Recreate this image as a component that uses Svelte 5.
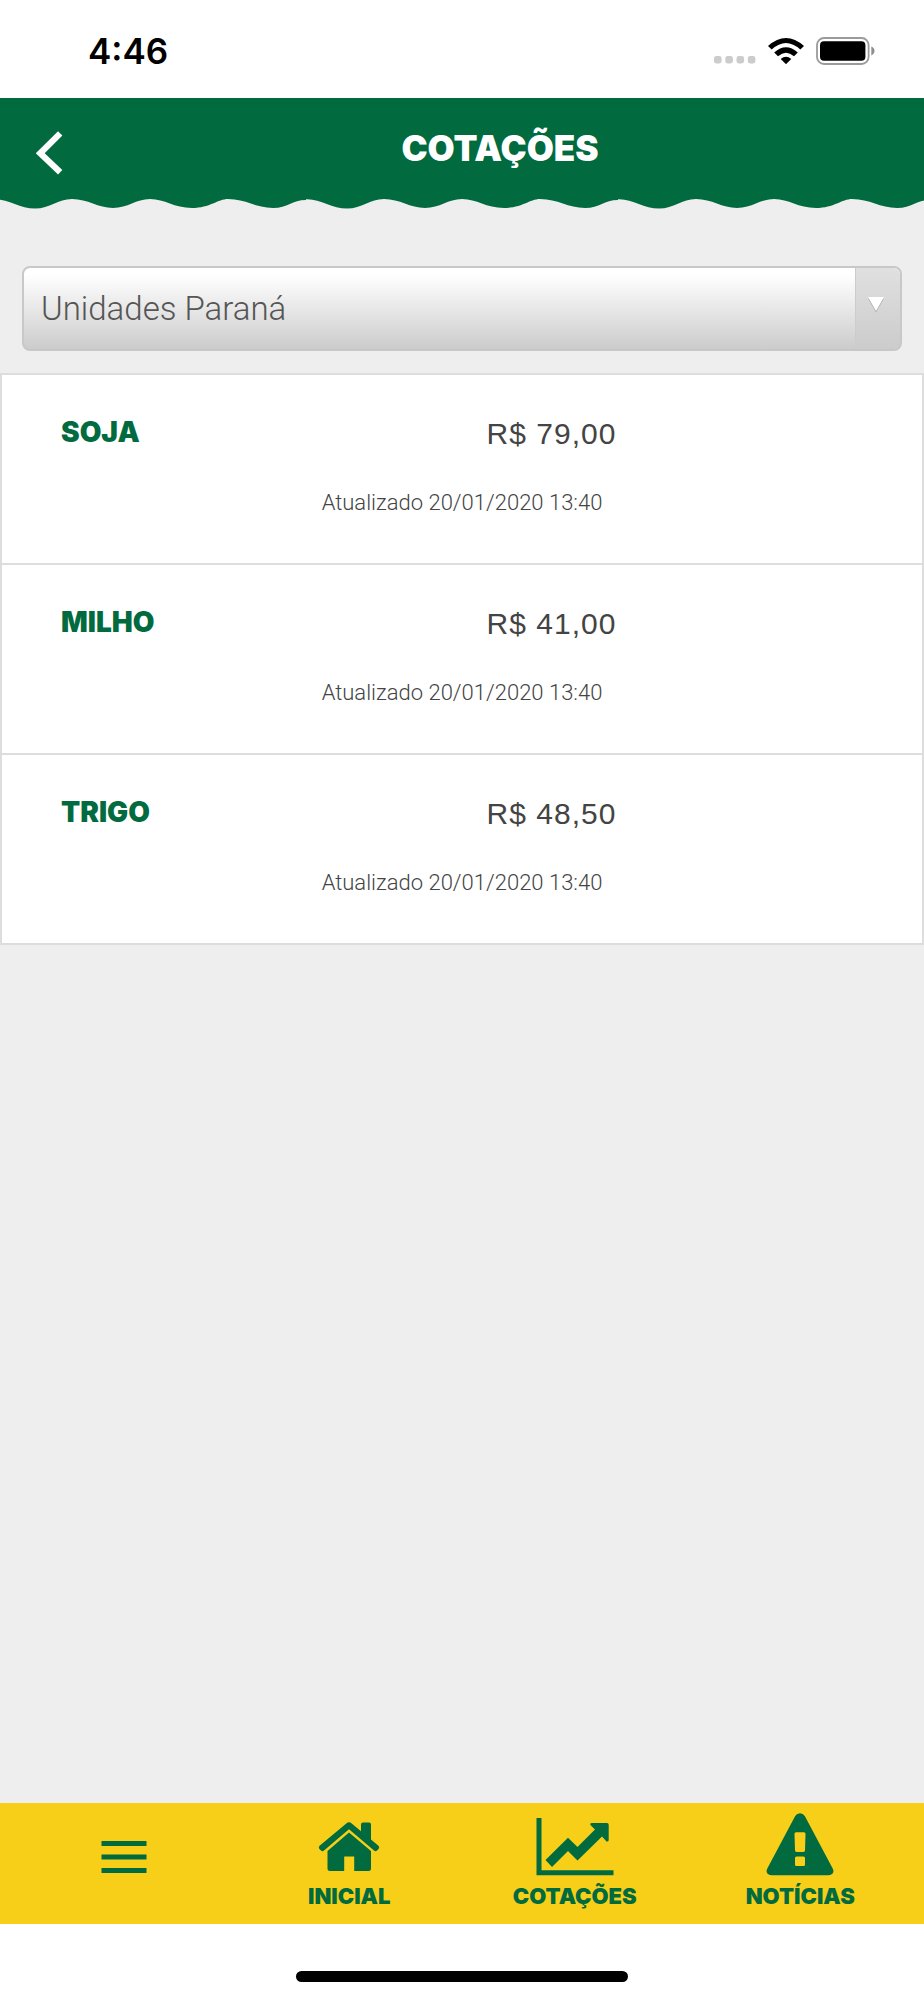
<script>
  const quotes = [
    { name: 'SOJA', price: 'R$ 79,00', updated: 'Atualizado 20/01/2020 13:40' },
    { name: 'MILHO', price: 'R$ 41,00', updated: 'Atualizado 20/01/2020 13:40' },
    { name: 'TRIGO', price: 'R$ 48,50', updated: 'Atualizado 20/01/2020 13:40' }
  ];
  let unit = $state('Unidades Paraná');
</script>

<div class="screen">
  <div class="status">
    <time>4:46</time>
    <div class="indicators">
      <svg class="dots" width="42" height="8" viewBox="0 0 42 8" aria-hidden="true">
        <rect x="0" y="0" width="7.6" height="7.4" rx="2.4" />
        <rect x="11.3" y="0" width="7.6" height="7.4" rx="2.4" />
        <rect x="22.5" y="0" width="7.6" height="7.4" rx="2.4" />
        <rect x="33.8" y="0" width="7.6" height="7.4" rx="2.4" />
      </svg>
      <svg class="wifi" width="36" height="26" viewBox="0 0 36 26" aria-hidden="true">
        <path d="M0 8Q18-8 36 8L32.3 11.6Q18-1.4 3.7 11.6Z" />
        <path d="M6.2 14.6Q18 3.8 29.8 14.6L26 18.3Q18 11 10 18.3Z" />
        <path d="M12.7 20.9Q18 16.6 23.3 20.9L18 26.2Z" />
      </svg>
      <svg class="battery" width="60" height="28" viewBox="0 0 60 28" aria-hidden="true">
        <rect x="1" y="1" width="51.6" height="26" rx="7" fill="none" stroke="#9b9b9b" stroke-width="1.8" />
        <rect x="4" y="4.3" width="45.4" height="19.4" rx="4" fill="#000" />
        <path d="M55.3 9.6C59.6 11.2 59.6 16.8 55.3 18.4Z" fill="#8e8e8e" />
      </svg>
    </div>
  </div>

  <header>
    <div class="bar">
      <button class="back" aria-label="Voltar">
        <svg width="28" height="46" viewBox="0 0 28 46"><path d="M24.2 3.4L4.2 23.3L24.2 42.2" fill="none" stroke="#fff" stroke-width="6.2" /></svg>
      </button>
      <h1>COTAÇÕES</h1>
    </div>
    <svg class="wave" width="100%" height="12" aria-hidden="true">
      <defs>
        <pattern id="scallop" x="-6" width="312" height="12" patternUnits="userSpaceOnUse">
          <path fill="#016b3f" d="M0 0V1.2C14 .5 26 10.6 41 10.6C56 10.6 64 1 78 1C94 1 104 10 119 10C134 10 142 1 156 1C171 1 180 10 198 10C216 10 224 1 234 1C252 1 262 10 279 10C294 10 298 2 312 2V0Z" />
        </pattern>
      </defs>
      <rect width="100%" height="12" fill="url(#scallop)" />
    </svg>
  </header>

  <main>
    <div class="picker">
      <select bind:value={unit} aria-label="Unidade">
        <option>Unidades Paraná</option>
      </select>
      <span class="arrow" aria-hidden="true">
        <svg width="18" height="18" viewBox="0 0 18 18">
          <path d="M1 2.5H17L9 16.5Z" fill="#adadad" />
          <path d="M1 1H17L9 15Z" fill="#fff" />
        </svg>
      </span>
    </div>

    <ul>
      {#each quotes as q}
        <li>
          <div class="line">
            <h2>{q.name}</h2>
            <span class="price">{q.price}</span>
          </div>
          <p>{q.updated}</p>
        </li>
      {/each}
    </ul>
  </main>

  <nav>
    <button aria-label="Menu">
      <svg width="46" height="34" viewBox="0 0 46 34"><path d="M.5 1h45v5h-45zM.5 14.5h45v5h-45zM.5 28h45v5h-45z" /></svg>
    </button>
    <a href="#inicial">
      <svg width="62" height="64" viewBox="0 0 62 64">
        <path d="M1.4 36Q0 34.4 1.6 32.8L28.3 10.4Q31 8.3 33.7 10.4L43 18.2V11.5Q43 9.6 45 9.6H51Q53 9.6 53 11.5V26.6L60.4 32.8Q62 34.4 60.6 36L59 37.6Q57.7 39 56 37.6L31 16.2L6 37.6Q4.300 39 3 37.6Z" />
        <path d="M31 19.400L53 38V55.500Q53 58 50.500 58H36.200V43.500H26.200V58H12Q9.500 58 9.500 55.500V38Z" />
      </svg>
      <span>INICIAL</span>
    </a>
    <a href="#cotacoes">
      <svg width="78" height="64" viewBox="0 0 78 64">
        <path d="M.5 5H5.500V57.300H77.500V62.300H.5Z" />
        <path d="M9.500 47L32 24.700L41.500 34L59 16.500L54.400 12Q53.800 10 55.500 10H71Q72.700 10 72.700 11.700V27Q72.500 29 70.500 28.500L66 23.500L41.500 47.500L32 38L16 54Z" />
      </svg>
      <span>COTAÇÕES</span>
    </a>
    <a href="#noticias">
      <svg width="68" height="64" viewBox="0 0 68 64">
        <path fill-rule="evenodd" d="M29.200 3Q31 .2 34 .2T38.800 3L66.700 55.500Q68.200 58.500 66.600 60.500Q65.300 62.300 62.500 62.300H5.500Q2.700 62.300 1.400 60.500Q-.2 58.500 1.300 55.500ZM30 19.300Q28.500 19.300 28.500 20.900L29 37.500Q29.100 38.900 30.500 38.900H37.500Q38.900 38.900 39 37.500L39.500 20.900Q39.500 19.300 38 19.300ZM30.500 43.500Q29 43.500 29 45V51.500Q29 53 30.500 53H37.500Q39 53 39 51.500V45Q39 43.500 37.500 43.500Z" />
      </svg>
      <span>NOTÍCIAS</span>
    </a>
  </nav>
  <div class="home"><span></span></div>
</div>

<style>
  :global(body) {
    margin: 0;
    background: #fff;
  }
  * {
    box-sizing: border-box;
  }
  .screen {
    display: flex;
    flex-direction: column;
    min-height: 100vh;
    background: #eee;
    color: #444;
    font-family: 'Liberation Sans', Arial, sans-serif;
  }
  .status {
    display: flex;
    justify-content: space-between;
    align-items: center;
    height: 98px;
    padding: 4px 48px 0 88px;
    background: #fff;
    color: #000;
  }
  time {
    font: 600 35px/40px Inter, sans-serif;
  }
  .indicators {
    display: flex;
    align-items: flex-end;
    gap: 12px;
    padding-bottom: 2px;
  }
  .dots {
    fill: #ccc;
  }
  .battery {
    margin-bottom: -1px;
  }
  svg {
    display: block;
  }
  .bar {
    display: flex;
    align-items: center;
    height: 100px;
    background: #016b3f;
    color: #fff;
  }
  button {
    border: 0;
    background: none;
    cursor: pointer;
  }
  .back {
    width: 76px;
    padding: 10px 0 0 36px;
  }
  h1,
  h2,
  nav span {
    margin: 0;
    font-family: Inter, sans-serif;
    font-weight: 900;
  }
  h1 {
    flex: 1;
    text-align: center;
    font-size: 35px;
    line-height: 44px;
  }
  .picker {
    position: relative;
    margin: 56px 22px 22px;
  }
  select {
    display: block;
    appearance: none;
    width: 100%;
    height: 85px;
    padding: 0 64px 0 17px;
    border: 2px solid #c8c8c8;
    border-radius: 8px;
    background: linear-gradient(#fff 8%, #ccc);
    color: #555;
    font: 300 33px Roboto, sans-serif;
  }
  .arrow {
    position: absolute;
    top: 2px;
    right: 2px;
    bottom: 2px;
    display: flex;
    align-items: center;
    justify-content: center;
    width: 45px;
    padding: 0 5px 8px 0;
    border-left: 1px solid #ccc;
    border-radius: 0 6px 6px 0;
    background: linear-gradient(#e0e0e0, #ccc);
    pointer-events: none;
  }
  ul {
    margin: 0;
    padding: 0;
    list-style: none;
    border: 2px solid #ddd;
    background: #fff;
  }
  li {
    padding: 38px 0 46px;
  }
  li + li {
    border-top: 2px solid #ddd;
  }
  .line {
    display: flex;
    align-items: flex-start;
    height: 44px;
    padding-left: 59px;
  }
  h2 {
    width: 120px;
    color: #016b3f;
    font-size: 28px;
    line-height: 38px;
  }
  .price {
    flex: 1;
    text-align: center;
    font-size: 30px;
    line-height: 42px;
    letter-spacing: 1px;
  }
  p {
    margin: 32px 0 0;
    text-align: center;
    font: 300 22px/28px Roboto, sans-serif;
  }
  nav {
    display: grid;
    grid-template-columns: repeat(4, 1fr);
    height: 121px;
    margin-top: auto;
    padding: 0 11px;
    background: #f7cf18;
    color: #016b3f;
  }
  nav svg {
    fill: #016b3f;
  }
  nav button,
  nav a {
    display: flex;
    flex-direction: column;
    align-items: center;
    padding: 10px 0 0;
    color: #016b3f;
    text-decoration: none;
  }
  nav button {
    padding-top: 37px;
  }
  nav span {
    margin-top: 6px;
    font-size: 22px;
    line-height: 26px;
  }
  .home {
    display: flex;
    justify-content: center;
    height: 76px;
    padding-top: 47px;
    background: #fff;
  }
  .home span {
    width: 36%;
    height: 11px;
    border-radius: 6px;
    background: #000;
  }
</style>
